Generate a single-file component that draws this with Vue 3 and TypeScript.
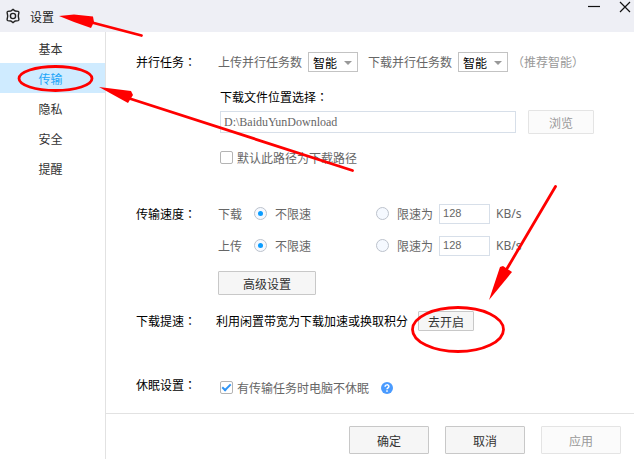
<script setup lang="ts">
import { ref } from 'vue'

interface SpeedRow {
  id: string
  name: string
  mode: 'free' | 'limited'
  limit: string
}

const tabs: string[] = ['基本', '传输', '隐私', '安全', '提醒']
const activeTab = ref('传输')

const uploadTasks = ref('智能')
const downloadTasks = ref('智能')
const path = ref('D:\\BaiduYunDownload')
const useDefaultPath = ref(false)
const keepAwake = ref(true)

const speeds = ref<SpeedRow[]>([
  { id: 'download', name: '下载', mode: 'free', limit: '128' },
  { id: 'upload', name: '上传', mode: 'free', limit: '128' },
])
</script>

<template>
  <div class="window">
    <header class="titlebar">
      <svg class="gear" viewBox="0 0 16 16" aria-hidden="true">
        <path d="M8 1.4L10.2 3L13.2 3.4Q14 3.6 13.9 4.6L13.4 7Q13.3 8 13.4 9L13.9 11.4Q14 12.4 13.2 12.6L10.2 13L8 14.6L5.8 13L2.8 12.6Q2 12.4 2.1 11.4L2.6 9Q2.7 8 2.6 7L2.1 4.6Q2 3.6 2.8 3.4L5.8 3Z" />
        <circle cx="8" cy="8" r="2.6" />
      </svg>
      <h1 class="title">设置</h1>
      <div class="window-actions">
        <button type="button" class="icon-button" aria-label="最小化">
          <svg viewBox="0 0 12 13"><path d="M0 6.5H12" /></svg>
        </button>
        <button type="button" class="icon-button" aria-label="关闭">
          <svg viewBox="0 0 12 13"><path d="M1 2L11 12M11 2L1 12" /></svg>
        </button>
      </div>
    </header>

    <div class="body">
      <nav class="sidebar">
        <button
          v-for="tab in tabs"
          :key="tab"
          type="button"
          class="tab"
          :class="{ active: tab === activeTab }"
          @click="activeTab = tab"
        >{{ tab }}</button>
      </nav>

      <div class="panel">
        <main class="settings">
          <section class="group">
            <h2 class="heading">并行任务<span class="colon">：</span></h2>
            <div class="fields">
              <div class="row">
                <label for="upload-tasks">上传并行任务数</label>
                <span class="select-box">
                  <select id="upload-tasks" v-model="uploadTasks"><option>智能</option></select>
                </span>
                <label for="download-tasks" class="second-label">下载并行任务数</label>
                <span class="select-box">
                  <select id="download-tasks" v-model="downloadTasks"><option>智能</option></select>
                </span>
                <span class="hint">（推荐智能）</span>
              </div>
              <div class="location">
                <label for="path" class="strong">下载文件位置选择<span class="colon">：</span></label>
                <div class="path-row">
                  <input id="path" v-model="path" type="text" class="text path">
                  <button type="button" class="button browse" disabled>浏览</button>
                </div>
                <label class="check">
                  <input v-model="useDefaultPath" type="checkbox">默认此路径为下载路径
                </label>
              </div>
            </div>
          </section>

          <section class="group speed">
            <h2 class="heading">传输速度<span class="colon">：</span></h2>
            <div class="fields speed-fields">
              <div v-for="row in speeds" :key="row.id" class="row speed-row">
                <span class="direction">{{ row.name }}</span>
                <label class="radio free">
                  <input v-model="row.mode" type="radio" :name="row.id" value="free">不限速
                </label>
                <label class="radio">
                  <input v-model="row.mode" type="radio" :name="row.id" value="limited">限速为
                </label>
                <input v-model="row.limit" type="text" class="text limit" :aria-label="row.name + '限速'">
                <span class="unit">KB/s</span>
              </div>
              <button type="button" class="button advanced">高级设置</button>
            </div>
          </section>

          <section class="group boost">
            <h2 class="heading">下载提速<span class="colon">：</span></h2>
            <div class="row boost-row">
              <span class="strong">利用闲置带宽为下载加速或换取积分</span>
              <button type="button" class="button enable">去开启</button>
            </div>
          </section>

          <section class="group sleep">
            <h2 class="heading">休眠设置<span class="colon">：</span></h2>
            <div class="row sleep-row">
              <label class="check">
                <input v-model="keepAwake" type="checkbox">有传输任务时电脑不休眠
              </label>
              <svg class="help" viewBox="0 0 12 12" aria-hidden="true">
                <circle cx="6" cy="6" r="6" />
                <path d="M4.1 4.7C4.1 2.3 7.9 2.3 7.9 4.5C7.9 5.8 6 5.8 6 7.3" />
                <rect x="5.2" y="8.3" width="1.6" height="1.5" />
              </svg>
            </div>
          </section>
        </main>

        <footer class="footer">
          <button type="button" class="button action">确定</button>
          <button type="button" class="button action">取消</button>
          <button type="button" class="button action" disabled>应用</button>
        </footer>
      </div>
    </div>

    <svg class="marks" width="634" height="459" viewBox="0 0 634 459" aria-hidden="true">
      <g class="mark-lines">
        <path d="M141.5 35.5L90 22" />
        <path d="M352.5 170.5L128 98" />
        <path d="M555.5 186.5L505 272" />
        <ellipse cx="55.5" cy="78.5" rx="36.5" ry="12" />
        <ellipse cx="458" cy="329.5" rx="45.5" ry="22" />
      </g>
      <g class="mark-heads">
        <path d="M59 16L74 14.5L93 16.5L94 22L91 28L74 22Z" />
        <path d="M99 87L131 91L133 95L128 103Z" />
        <path d="M489 300L500 267L503 266L512 272Z" />
      </g>
    </svg>
  </div>
</template>

<style>
body {
  margin: 0;
}
</style>

<style scoped>
.window {
  position: relative;
  display: flex;
  flex-direction: column;
  min-height: 100vh;
  background: #fff;
  color: #666;
  font-family: "Noto Sans CJK SC", sans-serif;
  font-size: 12px;
  line-height: 21px;
}

button,
input,
select {
  box-sizing: border-box;
  margin: 0;
  font: inherit;
}

.titlebar {
  display: flex;
  align-items: center;
  height: 32px;
  padding-left: 5px;
  background: #eeeff5;
}

.gear {
  width: 16px;
  height: 16px;
  margin-right: 9px;
  fill: none;
  stroke: #222;
  stroke-width: 1.4;
}

.title {
  margin: 0;
  color: #222;
  font-size: 12px;
  font-weight: 400;
}

.window-actions {
  display: flex;
  align-self: flex-start;
  gap: 19px;
  margin-left: auto;
  padding-right: 3px;
}

.icon-button {
  width: 12px;
  height: 13px;
  padding: 0;
  border: 0;
  background: none;
}

.icon-button svg {
  display: block;
  width: 12px;
  height: 13px;
  fill: none;
  stroke: #111;
  stroke-width: 1.2;
}

.body {
  display: flex;
  flex: 1;
}

.sidebar {
  box-sizing: border-box;
  display: flex;
  flex-direction: column;
  flex: none;
  width: 106px;
  padding-top: 1px;
  border-right: 1px solid #e2e2e2;
}

.tab {
  height: 30px;
  padding: 1px 4px 0 0;
  border: 0;
  background: none;
  color: #333;
}

.tab.active {
  background: #cfebff;
  color: #1ba4f8;
}

.panel {
  display: flex;
  flex: 1;
  flex-direction: column;
  min-width: 0;
}

.settings {
  flex: 1;
  padding: 19px 30px 0;
}

.group {
  display: grid;
  grid-template-columns: 82px 1fr;
}

.speed {
  margin-top: 35px;
}

.boost {
  margin-top: 15px;
}

.sleep {
  margin-top: 43px;
}

.heading {
  margin: 0;
  color: #000;
  font-size: 12px;
  font-weight: 400;
  white-space: nowrap;
}

.colon {
  font-family: "Noto Sans CJK TC", sans-serif;
  line-height: 1;
}

.strong {
  color: #000;
}

.row {
  display: flex;
  align-items: center;
  white-space: nowrap;
}

.select-box {
  position: relative;
  display: flex;
  width: 50px;
  margin-left: 6px;
}

.select-box::after {
  position: absolute;
  top: 9px;
  right: 6px;
  border: 4px solid transparent;
  border-top-color: #999;
  border-bottom: 0;
  content: "";
  pointer-events: none;
}

select {
  width: 100%;
  height: 20px;
  padding: 1px 0 0 4px;
  border: 1px solid #c3c3c3;
  border-radius: 0;
  appearance: none;
  background: #fff;
  color: #000;
  line-height: 17px;
}

.second-label {
  margin-left: 10px;
}

.hint {
  margin-left: 4px;
  margin-right: -30px;
  color: #999;
}

.location {
  display: flex;
  flex-direction: column;
  margin-top: 14px;
  padding-left: 2px;
}

.path-row {
  display: flex;
  align-items: center;
  gap: 12px;
  margin: 3px 10px 13px 0;
}

.text {
  border: 1px solid #d7dfe9;
  outline: 0;
  background: #fff;
  color: #666;
}

.path {
  flex: 1;
  min-width: 0;
  height: 22px;
  padding: 0 3px;
  font-family: "Liberation Serif", serif;
}

.button {
  padding: 1px 0 0;
  border: 1px solid #c8c8c8;
  border-radius: 1px;
  background: #f6f6f6;
  color: #333;
}

.button:disabled {
  border-color: #e4e4e4;
  background: #fbfbfb;
  color: #999;
}

.browse {
  width: 66px;
  height: 24px;
}

.check,
.radio {
  display: flex;
  align-items: center;
}

.check {
  gap: 4px;
}

.radio {
  gap: 8px;
}

input[type="checkbox"],
input[type="radio"] {
  display: grid;
  place-items: center;
  flex: none;
  width: 13px;
  height: 13px;
  border: 1px solid #b4b4b4;
  appearance: none;
  background: #fff;
}

input[type="checkbox"] {
  border-radius: 2px;
}

input[type="checkbox"]:checked::before {
  width: 7px;
  height: 3px;
  margin-bottom: 3px;
  border-bottom: 2px solid #2f94f5;
  border-left: 2px solid #2f94f5;
  content: "";
  transform: rotate(-45deg);
}

input[type="radio"] {
  border-color: #bcc2cc;
  border-radius: 50%;
  background: #f5f9ff;
}

input[type="radio"]:checked::before {
  width: 5px;
  height: 5px;
  border-radius: 50%;
  background: #0a9cff;
  content: "";
}

.speed-fields {
  display: flex;
  flex-direction: column;
  gap: 11px;
}

.direction {
  width: 36px;
}

.free {
  width: 122px;
}

.limit {
  width: 51px;
  height: 20px;
  margin: 0 6px;
  padding: 0 3px;
  font-family: "Liberation Sans", sans-serif;
  font-size: 11px;
}

.unit {
  font-family: "Noto Sans", sans-serif;
}

.advanced {
  width: 98px;
  height: 24px;
  margin-top: 4px;
}

.boost-row {
  gap: 10px;
  margin-left: -2px;
}

.enable {
  width: 56px;
  height: 20px;
  line-height: 17px;
}

.sleep-row {
  gap: 12px;
  padding: 3px 0 0 2px;
}

.help {
  width: 12px;
  height: 12px;
}

.help circle {
  fill: #4a9bff;
}

.help path {
  fill: none;
  stroke: #fff;
  stroke-width: 1.5;
}

.help rect {
  fill: #fff;
}

.footer {
  display: flex;
  justify-content: flex-end;
  gap: 16px;
  padding: 12px 13px 5px;
  border-top: 1px solid #e2e2e2;
}

.action {
  width: 80px;
  height: 28px;
}

.marks {
  position: absolute;
  top: 0;
  left: 0;
  pointer-events: none;
}

.mark-lines {
  fill: none;
  stroke: #f00;
  stroke-linecap: round;
  stroke-width: 2.8;
}

.mark-heads {
  fill: #f00;
}
</style>
